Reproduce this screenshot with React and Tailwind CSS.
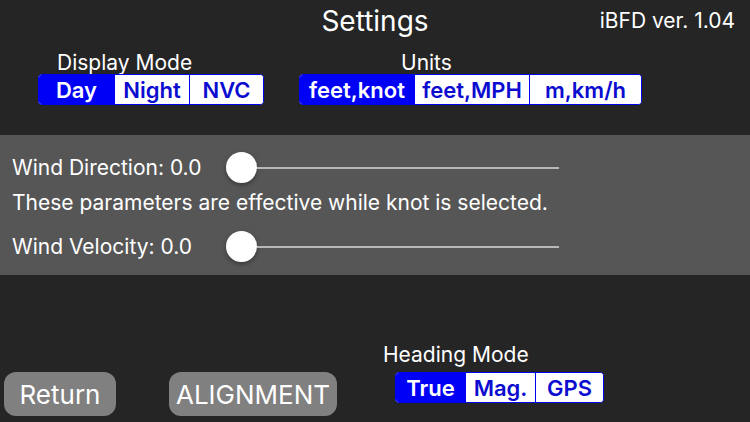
import React, { useState } from "react";

const Segmented = ({ options, widths, selected, onSelect }) => (
  <div className="flex h-[31px] rounded-[4px] border border-[#0000f0] bg-white overflow-hidden">
    {options.map((opt, i) => (
      <button
        key={opt}
        onClick={() => onSelect(i)}
        style={{ width: widths[i] }}
        className={
          "h-full flex items-center justify-center text-[22px] font-semibold leading-none " +
          (i > 0 ? "border-l border-[#0000f0] " : "") +
          (i === selected ? "bg-[#0000f5] text-white" : "bg-white text-[#0c0cd0]")
        }
      >
        {opt}
      </button>
    ))}
  </div>
);

const Slider = ({ label }) => (
  <div className="flex items-center h-[31px]">
    <span className="w-[214px] text-[21px] text-white">{label}</span>
    <div className="flex items-center w-[333px]">
      <div className="w-[31px] h-[31px] rounded-full bg-white shadow-[0_2px_4px_rgba(0,0,0,0.35)] shrink-0" />
      <div className="flex-1 h-[2px] bg-[#b8b8b8]" />
    </div>
  </div>
);

const App = () => {
  const [display, setDisplay] = useState(0);
  const [units, setUnits] = useState(0);
  const [heading, setHeading] = useState(0);

  return (
    <div
      className="w-[750px] h-[422px] bg-[#252525] flex flex-col overflow-hidden"
      style={{ fontFamily: "Inter, 'Noto Sans', 'Liberation Sans', sans-serif" }}
    >
      <div className="h-10 grid grid-cols-3 items-center">
        <div />
        <h1 className="text-center text-[28px] text-white">Settings</h1>
        <div className="text-right pr-[15px] text-[21px] text-white">iBFD ver. 1.04</div>
      </div>

      <div className="flex mt-3 pl-[38px]">
        <div className="flex flex-col">
          <span className="pl-[19px] text-[21px] leading-[22px] text-white">Display Mode</span>
          <Segmented
            options={["Day", "Night", "NVC"]}
            widths={[75, 75, 74]}
            selected={display}
            onSelect={setDisplay}
          />
        </div>
        <div className="flex flex-col ml-[35px]">
          <span className="pl-[102px] text-[21px] leading-[22px] text-white">Units</span>
          <Segmented
            options={["feet,knot", "feet,MPH", "m,km/h"]}
            widths={[114, 115, 112]}
            selected={units}
            onSelect={setUnits}
          />
        </div>
      </div>

      <div className="mt-[30px] h-[140px] bg-[#565656] px-3 pt-[17px] flex flex-col">
        <Slider label="Wind Direction: 0.0" />
        <p className="mt-[8px] h-[24px] flex items-center text-[21px] text-white">
          These parameters are effective while knot is selected.
        </p>
        <div className="mt-[16px]">
          <Slider label="Wind Velocity: 0.0" />
        </div>
      </div>

      <div className="flex-1 flex items-end pl-1 pb-[6px]">
        <button className="w-[112px] h-[44px] rounded-[12px] bg-[#808080] text-[26px] text-white">
          Return
        </button>
        <button className="ml-[53px] w-[168px] h-[44px] rounded-[12px] bg-[#808080] text-[26px] text-white">
          ALIGNMENT
        </button>
        <div className="ml-[46px] mb-[13px] flex flex-col">
          <span className="text-[21px] leading-[22px] text-white">Heading Mode</span>
          <div className="mt-[6px] ml-[12px]">
            <Segmented
              options={["True", "Mag.", "GPS"]}
              widths={[69, 70, 68]}
              selected={heading}
              onSelect={setHeading}
            />
          </div>
        </div>
      </div>
    </div>
  );
};

export default App;
